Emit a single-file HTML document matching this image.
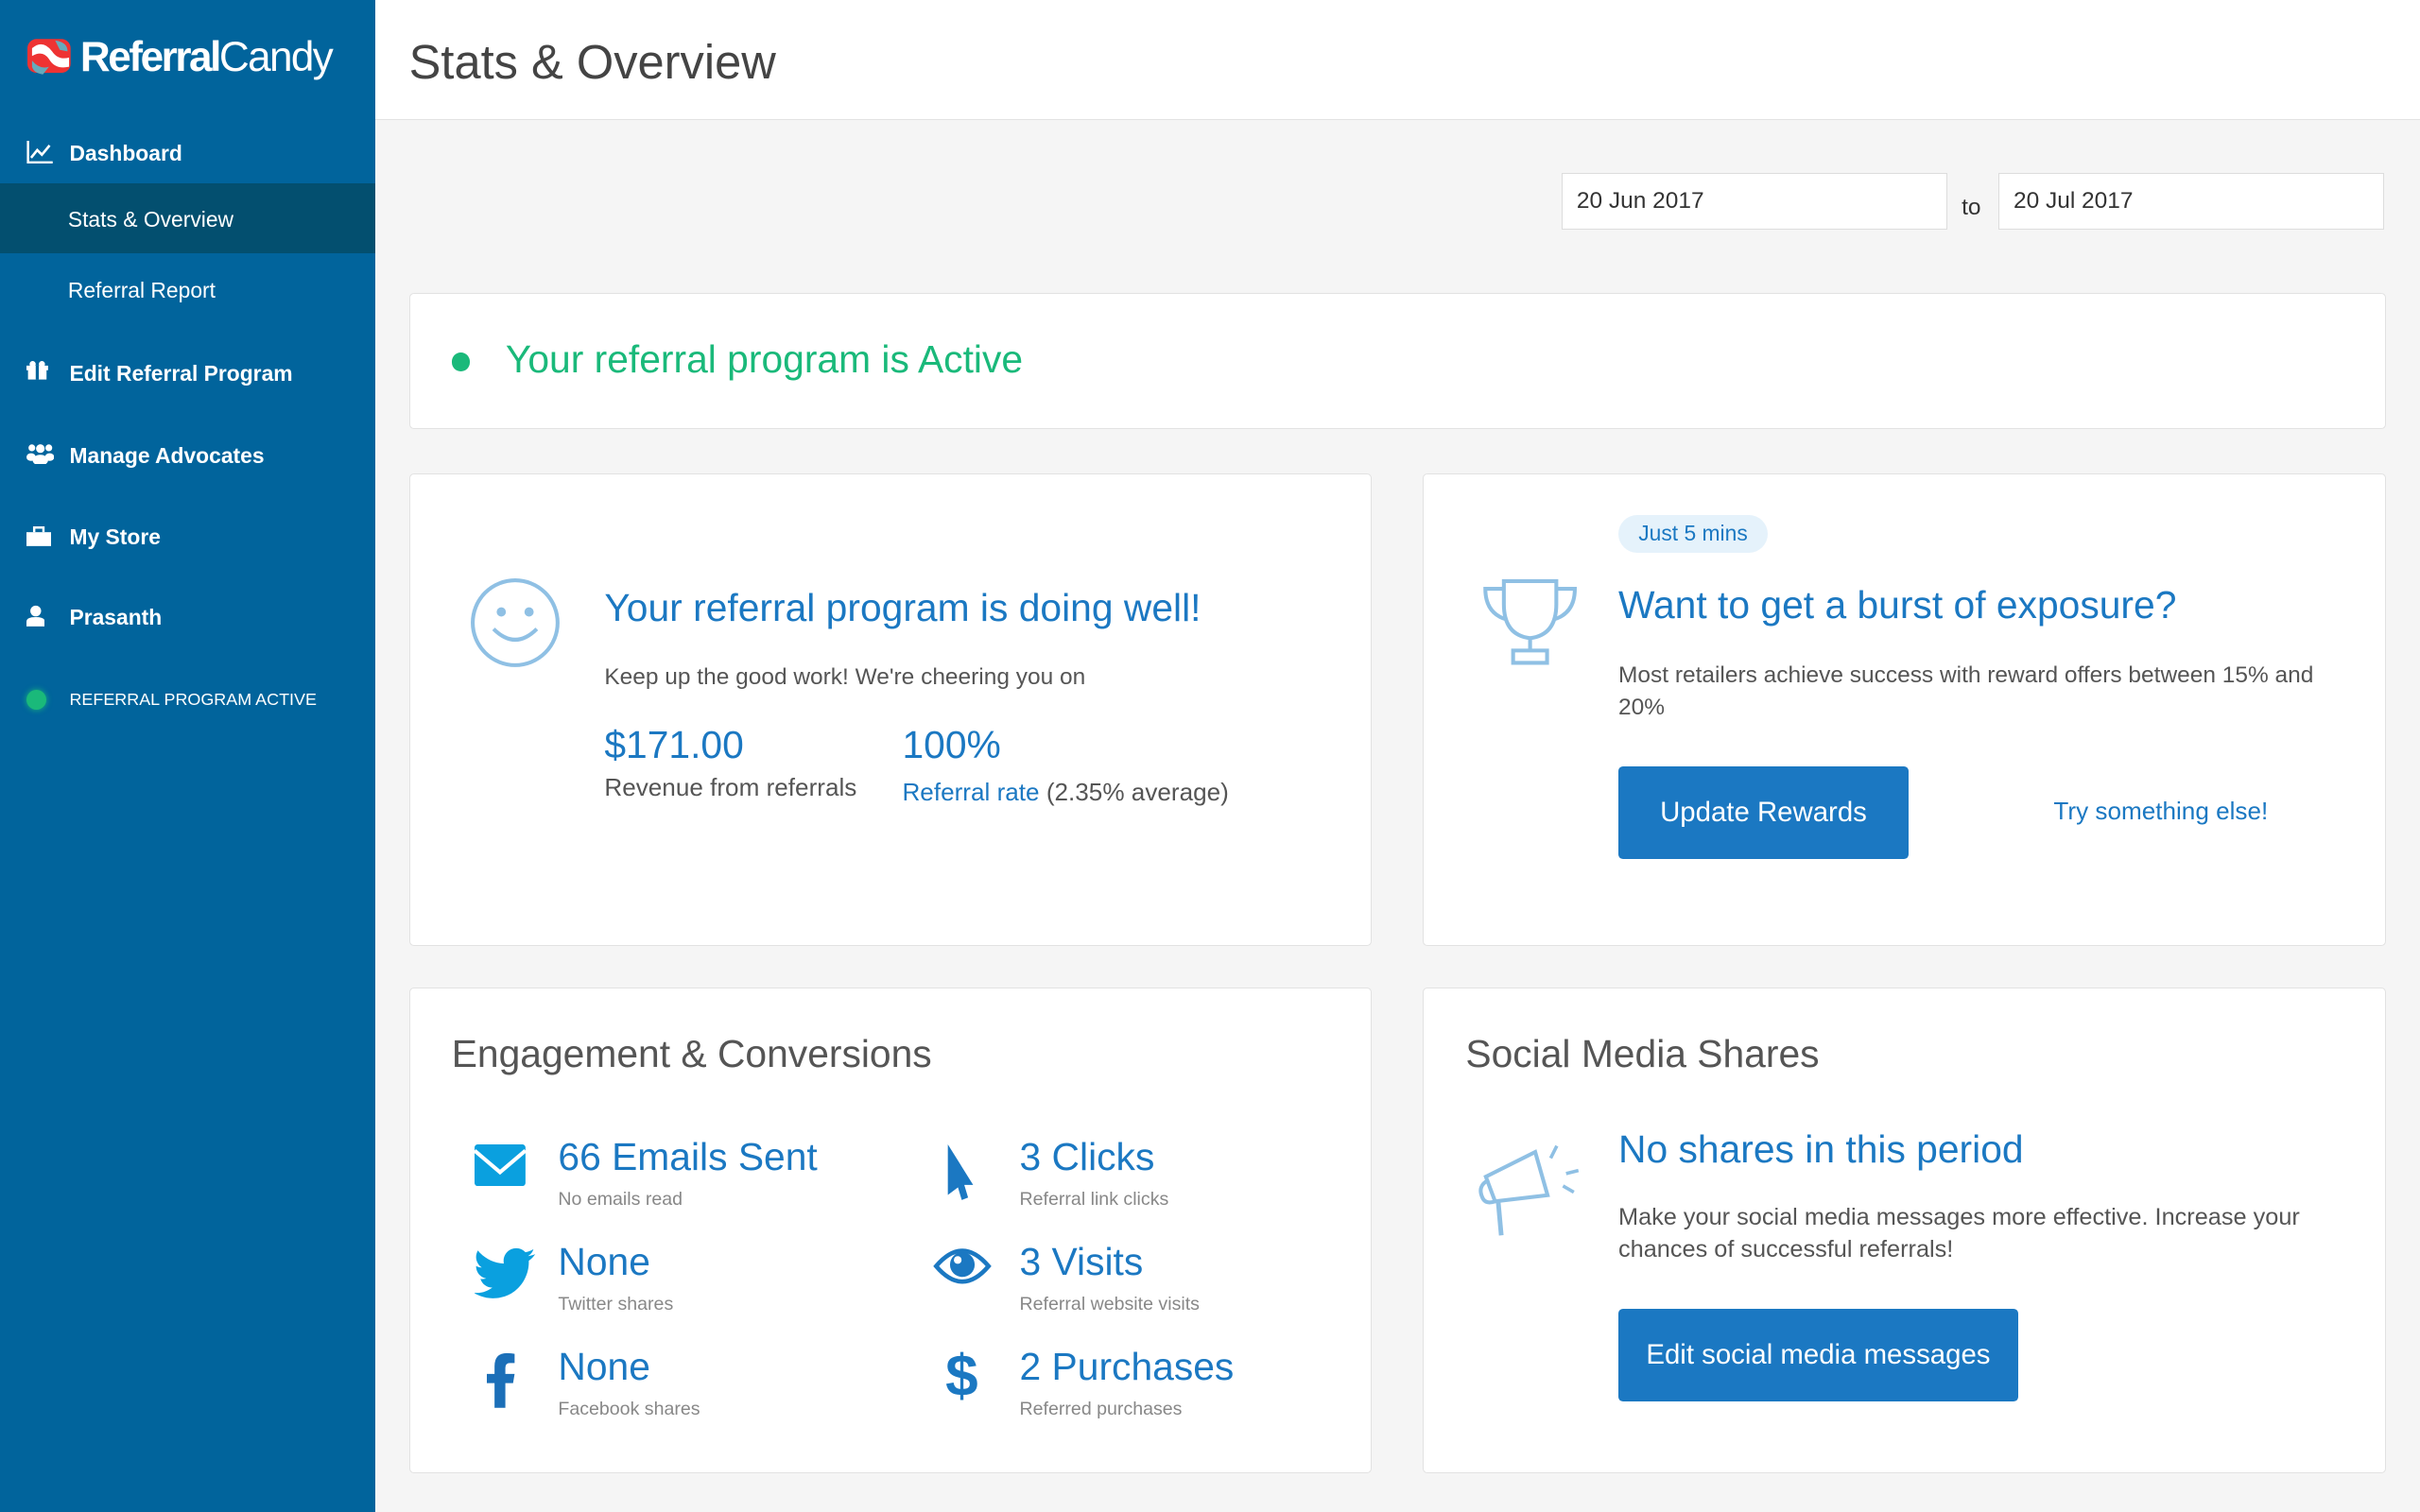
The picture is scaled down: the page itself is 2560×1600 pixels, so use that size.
<!DOCTYPE html>
<html><head><meta charset="utf-8">
<style>
*{box-sizing:border-box;margin:0;padding:0}
html,body{width:2560px;height:1600px;overflow:hidden;background:#f5f5f5}
#z{zoom:1.632653;width:1568px;height:980px;position:relative;font-family:"Liberation Sans",sans-serif;color:#555}
.sb{position:absolute;left:0;top:0;width:243px;height:980px;background:#01649c}
.logo{position:absolute;left:18px;top:22px;color:#fff;font-size:27px;letter-spacing:-1px}
.nav{position:absolute;left:0;width:243px;color:#fff;font-size:14px;font-weight:bold}
.nav .ic{position:absolute;left:17px;top:0}
.nav span.t{position:absolute;left:45px}
.sub{font-weight:normal}
.hdr{position:absolute;left:243px;top:0;right:0;height:78px;background:#fff;border-bottom:1px solid #e3e3e3}
.hdr h1{position:absolute;left:22px;top:22px;font-weight:normal;font-size:31px;color:#444}
.inp{position:absolute;top:112px;height:37px;width:250px;background:#fff;border:1px solid #ddd;font-size:15px;color:#333;padding:9px 9px}
.card{position:absolute;background:#fff;border:1px solid #e2e2e2;border-radius:3px}
.blue{color:#1b78c2}
.ttl{font-size:25px;color:#1b78c2;position:absolute}
.p{font-size:15px;color:#555;position:absolute;line-height:21px}
.btn{position:absolute;background:#1b78c2;color:#fff;font-size:18px;border-radius:3px;text-align:center}
.big{position:absolute;font-size:25px;color:#1b78c2}
.sm{position:absolute;font-size:12px;color:#888}
</style></head><body><div id="z">
<div class="sb">
 <svg style="position:absolute;left:18px;top:23px" width="30" height="28" viewBox="0 0 30 28"><rect x="0" y="2" width="28" height="22" rx="6" fill="#e33"/><path d="M3 8 Q10 2 16 10 Q20 16 27 14 L27 20 Q18 22 14 15 Q10 9 3 13Z" fill="#fff"/><path d="M3 16 Q8 22 14 20 L10 25 Q4 24 3 20Z" fill="#6ab"/><path d="M18 3 Q26 4 26 10 L21 9Z" fill="#6ab"/></svg>
 <div class="logo" style="left:52px"><span style="font-weight:bold;letter-spacing:-1.5px">Referral</span>Candy</div>
 <div class="nav" style="top:91px;height:20px"><svg class="ic" width="17" height="15" viewBox="0 0 17 15"><path d="M1 0V14H17" stroke="#fff" stroke-width="1.5" fill="none"/><path d="M3 11L7 6L10 9L15 3" stroke="#fff" stroke-width="1.6" fill="none"/></svg><span class="t" style="top:0">Dashboard</span></div>
 <div class="nav sub" style="top:119px;height:45px;background:#034f6f"><span class="t" style="top:15px;left:44px">Stats &amp; Overview</span></div>
 <div class="nav sub" style="top:180px"><span class="t" style="left:44px">Referral Report</span></div>
 <div class="nav" style="top:234px"><svg class="ic" width="14" height="13"><rect x="1" y="4" width="12" height="8" fill="#fff"/><rect x="0" y="3" width="14" height="3" fill="#fff"/><rect x="6" y="3" width="2" height="9" fill="#01649c"/><circle cx="4" cy="2" r="2" fill="#fff"/><circle cx="10" cy="2" r="2" fill="#fff"/></svg><span class="t">Edit Referral Program</span></div>
 <div class="nav" style="top:287px"><svg class="ic" width="18" height="14"><circle cx="3.5" cy="3" r="2.2" fill="#fff"/><circle cx="14.5" cy="3" r="2.2" fill="#fff"/><circle cx="9" cy="3.5" r="2.8" fill="#fff"/><ellipse cx="9" cy="11" rx="5" ry="3.5" fill="#fff"/><ellipse cx="3" cy="9" rx="3" ry="2.5" fill="#fff"/><ellipse cx="15" cy="9" rx="3" ry="2.5" fill="#fff"/></svg><span class="t">Manage Advocates</span></div>
 <div class="nav" style="top:340px"><svg class="ic" width="16" height="14"><path d="M5 5V2H11V5" stroke="#fff" stroke-width="1.5" fill="none"/><rect x="0" y="5" width="16" height="9" fill="#fff"/></svg><span class="t">My Store</span></div>
 <div class="nav" style="top:392px"><svg class="ic" width="12" height="14"><circle cx="6" cy="4" r="3.5" fill="#fff"/><path d="M0 14V11Q0 8 6 8Q12 8 12 11V14Z" fill="#fff"/></svg><span class="t">Prasanth</span></div>
 <div class="nav" style="top:447px;font-size:11px;font-weight:normal"><div style="position:absolute;left:17px;top:0;width:13px;height:13px;border-radius:50%;background:#1ab97a;box-shadow:0 0 4px #1ab97a"></div><span class="t" style="top:0">REFERRAL PROGRAM ACTIVE</span></div>
</div>
<div class="hdr"><h1>Stats &amp; Overview</h1></div>
<div class="inp" style="left:1012px">20 Jun 2017</div>
<div style="position:absolute;left:1271px;top:126px;font-size:15px;color:#333">to</div>
<div class="inp" style="left:1295px">20 Jul 2017</div>

<div class="card" style="left:265px;top:190px;width:1281px;height:88px">
 <div style="position:absolute;left:27px;top:38px;width:12px;height:12px;border-radius:50%;background:#1ab97a"></div>
 <div style="position:absolute;left:62px;top:28px;font-size:25px;color:#1ab97a">Your referral program is Active</div>
</div>

<div class="card" style="left:265px;top:307px;width:624px;height:306px">
 <svg style="position:absolute;left:38px;top:66px" width="60" height="60" viewBox="0 0 60 60"><circle cx="30" cy="30" r="27.5" stroke="#8fc0e4" stroke-width="2.5" fill="none"/><circle cx="21" cy="23" r="3" fill="#8fc0e4"/><circle cx="39" cy="23" r="3" fill="#8fc0e4"/><path d="M16 34Q30 48 44 34" stroke="#8fc0e4" stroke-width="2.5" fill="none"/></svg>
 <div class="ttl" style="left:126px;top:72px">Your referral program is doing well!</div>
 <div class="p" style="left:126px;top:121px">Keep up the good work! We're cheering you on</div>
 <div class="big" style="left:126px;top:161px">$171.00</div>
 <div class="p" style="left:126px;top:192px;font-size:16px">Revenue from referrals</div>
 <div class="big" style="left:319px;top:161px">100%</div>
 <div class="p" style="left:319px;top:195px;font-size:16px"><span class="blue">Referral rate</span> (2.35% average)</div>
</div>

<div class="card" style="left:922px;top:307px;width:624px;height:306px">
 <div style="position:absolute;left:126px;top:26px;background:#e5f2fb;color:#1b78c2;font-size:14px;padding:4px 13px;border-radius:13px">Just 5 mins</div>
 <svg style="position:absolute;left:38px;top:66px" width="62" height="58" viewBox="0 0 62 58"><path d="M14 3H48V18Q48 38 31 40Q14 38 14 18Z" stroke="#8fc0e4" stroke-width="2.5" fill="none"/><path d="M14 8H2Q2 24 16 28M48 8H60Q60 24 46 28" stroke="#8fc0e4" stroke-width="2.5" fill="none"/><path d="M31 40V48M20 48H42V56H20Z" stroke="#8fc0e4" stroke-width="2.5" fill="none"/></svg>
 <div class="ttl" style="left:126px;top:70px">Want to get a burst of exposure?</div>
 <div class="p" style="left:126px;top:120px;width:470px">Most retailers achieve success with reward offers between 15% and 20%</div>
 <div class="btn" style="left:126px;top:189px;width:188px;height:60px;line-height:60px">Update Rewards</div>
 <div style="position:absolute;left:408px;top:209px;font-size:16px;color:#1b78c2">Try something else!</div>
</div>

<div class="card" style="left:265px;top:640px;width:624px;height:315px">
 <div style="position:absolute;left:27px;top:28px;font-size:25px;color:#555">Engagement &amp; Conversions</div>
 <svg style="position:absolute;left:42px;top:101px" width="33" height="27"><rect width="33" height="27" rx="2" fill="#0aa0df"/><path d="M0 4L16.5 18L33 4" stroke="#fff" stroke-width="2.5" fill="none"/></svg>
 <div class="big" style="left:96px;top:95px">66 Emails Sent</div><div class="sm" style="left:96px;top:130px">No emails read</div>
 <svg style="position:absolute;left:42px;top:168px" width="40" height="34" viewBox="0 0 24 20"><path d="M23.6 2.4c-.9.4-1.8.6-2.8.8 1-.6 1.8-1.6 2.1-2.7-.9.6-2 1-3.1 1.2C18.9.7 17.6.1 16.2.1c-2.7 0-4.9 2.2-4.9 4.9 0 .4 0 .8.1 1.1C7.3 5.9 3.7 4 1.3 1 .9 1.7.6 2.6.6 3.5c0 1.700.9 3.2 2.2 4.1-.8 0-1.6-.2-2.2-.6v.1c0 2.400 1.7 4.4 3.9 4.8-.4.1-.8.2-1.300.2-.3 0-.6 0-.9-.1.6 2 2.4 3.4 4.6 3.4-1.7 1.3-3.8 2.1-6.1 2.1-.4 0-.8 0-1.2-.1 2.2 1.4 4.8 2.2 7.5 2.2 9.1 0 14-7.5 14-14v-.6c1-.7 1.8-1.6 2.5-2.6z" fill="#0aa0df"/></svg>
 <div class="big" style="left:96px;top:163px">None</div><div class="sm" style="left:96px;top:198px">Twitter shares</div>
 <svg style="position:absolute;left:50px;top:236px" width="18" height="36" viewBox="0 0 18 36"><path d="M12 36V20H17L18 14H12V10Q12 7 15 7H18V1Q16 0.5 13 0.5Q5 0.5 5 9V14H0V20H5V36Z" fill="#1b6fb8"/></svg>
 <div class="big" style="left:96px;top:231px">None</div><div class="sm" style="left:96px;top:266px">Facebook shares</div>
 <svg style="position:absolute;left:347px;top:101px" width="24" height="36" viewBox="0 0 24 36"><path d="M2 0L22 32L15 32L18 42L13 44L10 34L2 40Z" fill="#1b78c2" transform="scale(0.82)"/></svg>
 <div class="big" style="left:395px;top:95px">3 Clicks</div><div class="sm" style="left:395px;top:130px">Referral link clicks</div>
 <svg style="position:absolute;left:339px;top:166px" width="38" height="28" viewBox="0 0 38 28"><path d="M2 14Q19 -6 36 14Q19 34 2 14Z" stroke="#1b78c2" stroke-width="2.8" fill="none"/><circle cx="19" cy="13" r="8" fill="#1b78c2"/><circle cx="16" cy="10" r="2.5" fill="#fff"/></svg>
 <div class="big" style="left:395px;top:163px">3 Visits</div><div class="sm" style="left:395px;top:198px">Referral website visits</div>
 <div style="position:absolute;left:347px;top:230px;font-size:38px;font-weight:bold;color:#1b78c2">$</div>
 <div class="big" style="left:395px;top:231px">2 Purchases</div><div class="sm" style="left:395px;top:266px">Referred purchases</div>
</div>

<div class="card" style="left:922px;top:640px;width:624px;height:315px">
 <div style="position:absolute;left:27px;top:28px;font-size:25px;color:#555">Social Media Shares</div>
 <svg style="position:absolute;left:34px;top:98px" width="70" height="66" viewBox="0 0 70 66"><path d="M6 24L38 8L46 36L12 40Z" stroke="#8fc0e4" stroke-width="2.5" fill="none"/><path d="M8 26Q0 30 4 38Q6 42 12 40" stroke="#8fc0e4" stroke-width="2.5" fill="none"/><path d="M14 40L16 62" stroke="#8fc0e4" stroke-width="3"/><path d="M52 4L48 12M58 22L66 20M56 30L63 34" stroke="#8fc0e4" stroke-width="2.2"/></svg>
 <div class="ttl" style="left:126px;top:90px">No shares in this period</div>
 <div class="p" style="left:126px;top:138px;width:470px;font-size:15.5px">Make your social media messages more effective. Increase your chances of successful referrals!</div>
 <div class="btn" style="left:126px;top:208px;width:259px;height:60px;line-height:60px">Edit social media messages</div>
</div>
</div></body></html>
